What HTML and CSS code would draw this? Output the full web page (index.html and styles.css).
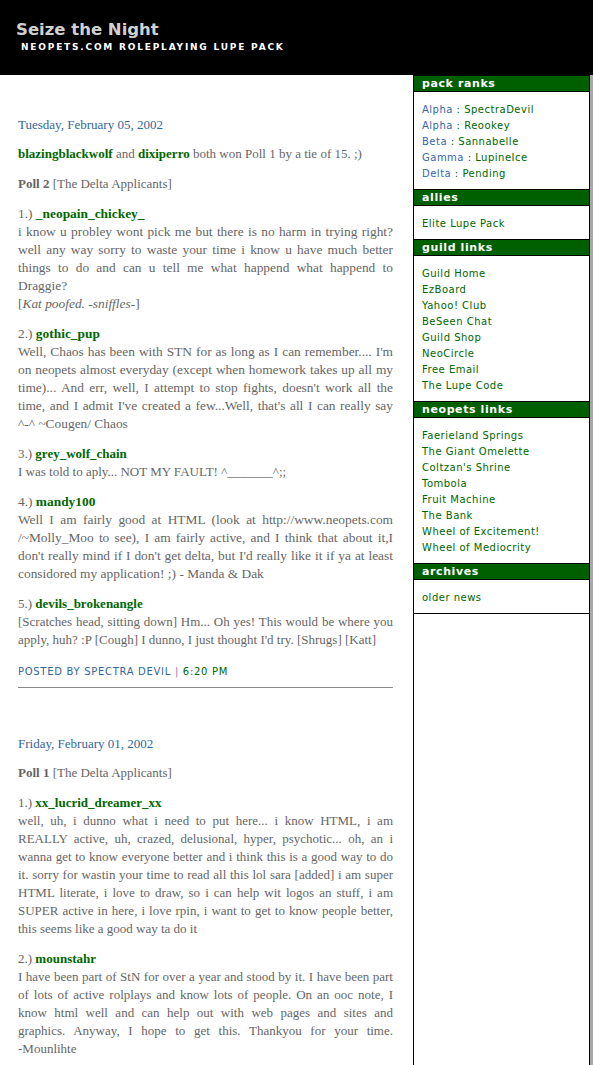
FILE: index.html
```html
<!DOCTYPE html>
<html>
<head>
<meta charset="utf-8">
<title>Seize the Night</title>
<link rel="stylesheet" href="styles.css">
</head>
<body>
<div class="header">
  <div class="site-title">Seize the Night</div>
  <div class="site-desc">NEOPETS.COM ROLEPLAYING LUPE PACK</div>
</div>
<div class="layout">
  <div class="main">
    <div class="post">
      <div class="date">Tuesday, February 05, 2002</div>
      <p><b class="nm">blazingblackwolf</b> and <b class="nm">dixiperro</b> both won Poll 1 by a tie of 15. ;)</p>
      <p><b>Poll 2</b> [The Delta Applicants]</p>
      <p class="wide">1.) <b class="nm">_neopain_chickey_</b><br>i know u probley wont pick me but there is no harm in trying right? well any way sorry to waste your time i know u have much better things to do and can u tell me what happend what happend to Draggie?<br>[<i>Kat poofed. -sniffles-</i>]</p>
      <p class="wide">2.) <b class="nm">gothic_pup</b><br>Well, Chaos has been with STN for as long as I can remember.... I'm on neopets almost everyday (except when homework takes up all my time)... And err, well, I attempt to stop fights, doesn't work all the time, and I admit I've created a few...Well, that's all I can really say <span class="nw">^-^</span> ~Cougen/ Chaos</p>
      <p>3.) <b class="nm">grey_wolf_chain</b><br>I was told to aply... NOT MY FAULT! ^_______^;;</p>
      <p class="wide">4.) <b class="nm">mandy100</b><br>Well I am fairly good at HTML (look at http://www.neopets.com<wbr>/~Molly_Moo to see), I am fairly active, and I think that about it,I don't really mind if I don't get delta, but I'd really like it if ya at least considored my application! ;) - Manda &amp; Dak</p>
      <p>5.) <b class="nm">devils_brokenangle</b><br>[Scratches head, sitting down] Hm... Oh yes! This would be where you apply, huh? :P [Cough] I dunno, I just thought I'd try. [Shrugs] [Katt]</p>
      <div class="post-footer">Posted by Spectra Devil <span class="sep">|</span> <span class="time">6:20 PM</span></div>
    </div>
    <div class="post">
      <div class="date">Friday, February 01, 2002</div>
      <p><b>Poll 1</b> [The Delta Applicants]</p>
      <p>1.) <b class="nm">xx_lucrid_dreamer_xx</b><br>well, uh, i dunno what i need to put here... i know HTML, i am REALLY active, uh, crazed, delusional, hyper, psychotic... oh, an i wanna get to know everyone better and i think this is a good way to do it. sorry for wastin your time to read all this lol sara [added] i am super HTML literate, i love to draw, so i can help wit logos an stuff, i am SUPER active in here, i love rpin, i want to get to know people better, this seems like a good way ta do it</p>
      <p>2.) <b class="nm">mounstahr</b><br>I have been part of StN for over a year and stood by it. I have been part of lots of active rolplays and know lots of people. On an ooc note, I know html well and can help out with web pages and sites and graphics. Anyway, I hope to get this. Thankyou for your time. <span class="nw">-Mounlihte</span></p>
    </div>
  </div>
  <div class="sidebar-wrap">
    <div class="sidebar">
      <div class="box-title">pack ranks</div>
      <div class="box-body">
        <div><span class="rank">Alpha</span> : SpectraDevil</div>
        <div><span class="rank">Alpha</span> : Reookey</div>
        <div><span class="rank">Beta</span> : Sannabelle</div>
        <div><span class="rank">Gamma</span> : LupineIce</div>
        <div><span class="rank">Delta</span> : Pending</div>
      </div>
      <div class="box-title">allies</div>
      <div class="box-body">
        <div>Elite Lupe Pack</div>
      </div>
      <div class="box-title">guild links</div>
      <div class="box-body">
        <div>Guild Home</div>
        <div>EzBoard</div>
        <div>Yahoo! Club</div>
        <div>BeSeen Chat</div>
        <div>Guild Shop</div>
        <div>NeoCircle</div>
        <div>Free Email</div>
        <div>The Lupe Code</div>
      </div>
      <div class="box-title">neopets links</div>
      <div class="box-body">
        <div>Faerieland Springs</div>
        <div>The Giant Omelette</div>
        <div>Coltzan's Shrine</div>
        <div>Tombola</div>
        <div>Fruit Machine</div>
        <div>The Bank</div>
        <div>Wheel of Excitement!</div>
        <div>Wheel of Mediocrity</div>
      </div>
      <div class="box-title">archives</div>
      <div class="box-body">
        <div>older news</div>
      </div>
    </div>
  </div>
</div>
</body>
</html>
```
FILE: styles.css
```css
html, body {
  margin: 0;
  padding: 0;
  background: #fff;
}
body {
  overflow: hidden;
}
.header {
  background: #000;
  height: 75px;
  box-sizing: border-box;
  padding: 19px 0 0 16px;
  font-family: "DejaVu Sans", Verdana, sans-serif;
}
.site-title {
  font-size: 16.5px;
  font-weight: bold;
  color: #d0d0d0;
  letter-spacing: 0;
  line-height: 21px;
}
.site-desc {
  font-size: 9px;
  font-weight: bold;
  color: #fff;
  letter-spacing: 1.8px;
  line-height: 12px;
  padding-left: 5px;
  margin-top: 1px;
}
.layout {
  display: flex;
  align-items: stretch;
  min-height: 990px;
}
.main {
  width: 375px;
  padding: 41px 20px 0 18px;
  font-family: "Liberation Serif", "DejaVu Serif", serif;
  font-size: 13px;
  line-height: 18px;
  color: #666;
}
.date {
  color: #336699;
  margin-bottom: 11px;
}
.main p {
  margin: 0 0 12px 0;
  text-align: justify;
}
.main p.wide {
  font-size: 13.4px;
}
.nm {
  color: #006600;
}
.nw {
  white-space: nowrap;
}
.post-footer {
  font-family: "DejaVu Sans", Verdana, sans-serif;
  font-size: 10px;
  letter-spacing: 0.7px;
  line-height: 13px;
  text-transform: uppercase;
  color: #336699;
  padding: 4px 0 9px 0;
  border-bottom: 1px solid #888;
  margin-bottom: 47px;
}
.post-footer .sep {
  color: #9977aa;
}
.post-footer .time {
  color: #006600;
}
.sidebar-wrap {
  width: 177px;
  border-right: 3px solid #a8a8a8;
}
.sidebar {
  height: 100%;
  box-sizing: border-box;
  border-left: 1px solid #000;
  border-right: 1px solid #000;
  border-top: 1px solid #000;
  font-family: "DejaVu Sans", Verdana, sans-serif;
}
.box-title {
  background: #006000;
  color: #fff;
  font-size: 11px;
  font-weight: bold;
  letter-spacing: 0.6px;
  line-height: 15px;
  padding-left: 8px;
  border-bottom: 1px solid #000;
}
.box-body {
  padding: 10px 8px 7px 8px;
  font-size: 10px;
  line-height: 16px;
  letter-spacing: 0.5px;
  color: #006600;
  border-bottom: 1px solid #000;
}
.rank {
  color: #3366aa;
}
```
